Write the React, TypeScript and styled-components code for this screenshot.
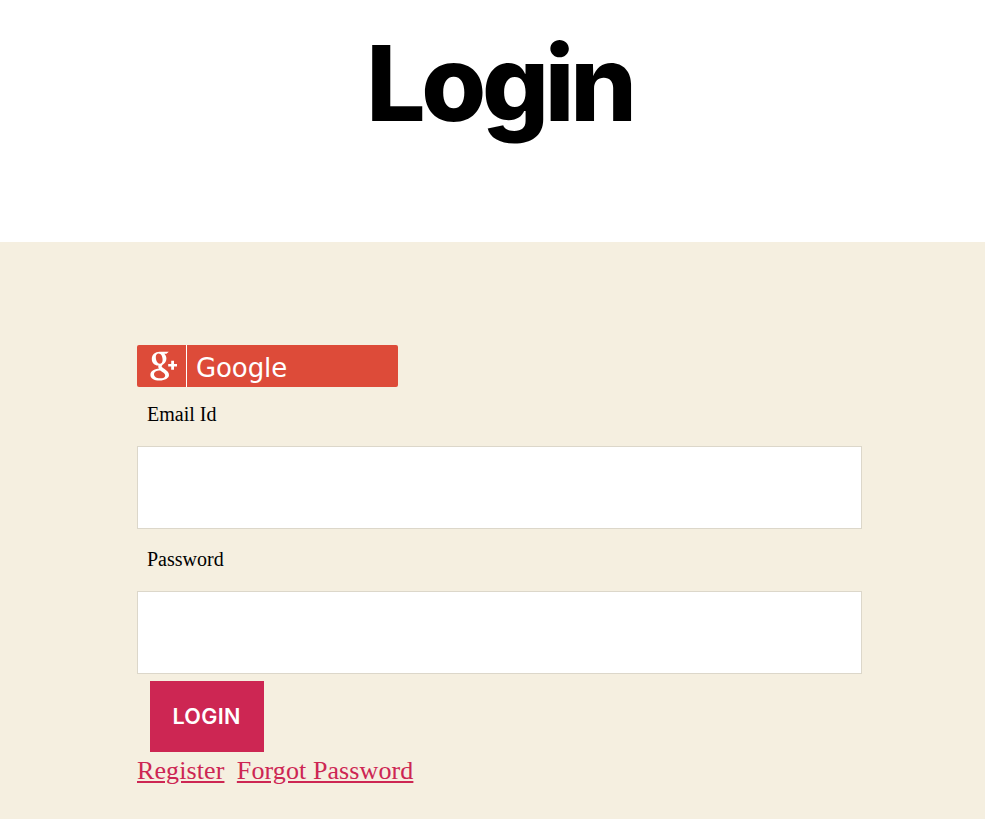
import React from "react";
import styled, { createGlobalStyle } from "styled-components";

const GlobalStyle = createGlobalStyle`
  *, *::before, *::after { box-sizing: border-box; }
  body { margin: 0; background: #f5efe0; overflow: hidden; }
`;

const Page = styled.div`
  min-height: 819px;
  background: #f5efe0;
`;

const Header = styled.header`
  height: 242px;
  padding: 20px 0 0 14px;
  background: #fff;
  text-align: center;
`;

const Title = styled.h1`
  margin: 0;
  font: 800 105px/126px Inter, sans-serif;
  letter-spacing: -0.041em;
  color: #000;
`;

const Form = styled.form`
  display: flex;
  flex-direction: column;
  align-items: flex-start;
  width: 725px;
  margin-left: 137px;
  padding-top: 103px;
`;

const GoogleButton = styled.button`
  display: flex;
  width: 261px;
  height: 42px;
  padding: 0;
  border: 0;
  border-radius: 2px;
  background: #dd4b39;
  color: #fff;
  font: 26px/46px "DejaVu Sans", sans-serif;
  letter-spacing: -0.1px;
  text-align: left;
`;

const GoogleIcon = styled.span`
  width: 50px;
  height: 42px;
  border-right: 1px solid #fff;

  svg { display: block; }
`;

const GoogleLabel = styled.span`
  padding-left: 9px;
`;

const Label = styled.label<{ $height: number; $lift: number }>`
  height: ${(p) => p.$height}px;
  padding: 0 0 ${(p) => p.$lift}px 10px;
  display: flex;
  align-items: center;
  font: 20px/24px "Liberation Serif", serif;
  color: #000;
`;

const Input = styled.input`
  width: 725px;
  height: 83px;
  padding: 20px;
  border: 1px solid #dcd7ca;
  border-radius: 0;
  background: #fff;
  font: 26px "Liberation Serif", serif;
`;

const Submit = styled.button`
  width: 114px;
  height: 71px;
  margin: 7px 0 0 13px;
  padding: 0 1px 0 0;
  border: 0;
  background: #cd2653;
  color: #fff;
  font: 600 21.6px/27px Inter, sans-serif;
  letter-spacing: 0.3px;
  text-transform: uppercase;
`;

const Links = styled.nav`
  display: flex;
  gap: 12.4px;
  padding-top: 4px;
`;

const Link = styled.a`
  color: #cd2653;
  font: 26px/30px "Liberation Serif", serif;
  letter-spacing: 0.1px;
  text-decoration: underline;
`;

const GooglePlus = () => (
  <svg width="49" height="42" viewBox="0 0 49 42" fill="#fff">
    <path
      fillRule="evenodd"
      d="M22.6 6.8H31.8L29.5 8.8H27.3C28.7 10 29.4 11.7 29.4 13.6C29.4 16 28.3 17.8 26.6 19.1C25 20.3 24.7 20.9 24.7 21.5C24.7 22.2 25.9 22.8 27.6 24.1C30.3 26 32 27.7 32 30C32 33.1 28.1 35.5 22.5 35.5C17 35.5 13.4 33.4 13.4 29.9C13.4 26.2 17.1 24.1 22.2 23.6C21.2 22.7 21 21.6 21.5 20.5C17.6 20.6 14.8 18 14.8 14C14.8 9.8 18.1 6.8 22.6 6.8ZM21.6 8.6C20 8.6 18.8 9.9 18.8 12C18.8 15.6 20.5 18.7 22.9 18.7C24.5 18.7 25.6 17.3 25.6 15C25.6 11.4 24 8.6 21.6 8.6ZM23.2 25.4C19.4 25.5 17 26.8 17 29.2C17 31.6 19.5 33.3 23 33.3C26.3 33.3 28.2 32.3 28.2 30.4C28.2 28.5 26.4 27.5 23.2 25.4Z"
    />
    <path d="M34.2 15.8H37V18.9H40V21.6H37V24.8H34.2V21.6H31.2V18.9H34.2Z" />
  </svg>
);

export default function App() {
  return (
    <Page>
      <GlobalStyle />
      <Header>
        <Title>Login</Title>
      </Header>
      <Form>
        <GoogleButton type="button">
          <GoogleIcon><GooglePlus /></GoogleIcon>
          <GoogleLabel>Google</GoogleLabel>
        </GoogleButton>
        <Label $height={59} $lift={6} htmlFor="email">Email Id</Label>
        <Input id="email" type="email" />
        <Label $height={62} $lift={2} htmlFor="password">Password</Label>
        <Input id="password" type="password" />
        <Submit type="button">Login</Submit>
        <Links>
          <Link href="#">Register</Link>
          <Link href="#">Forgot Password</Link>
        </Links>
      </Form>
    </Page>
  );
}
